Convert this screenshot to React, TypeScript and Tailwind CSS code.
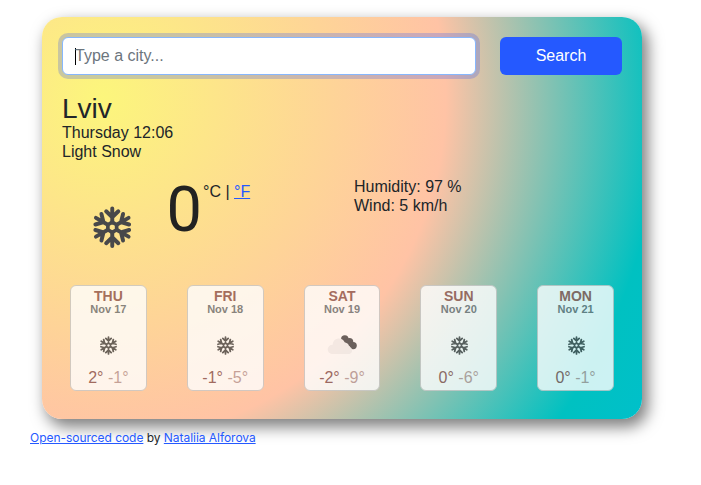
const ARMS = [0, 60, 120, 180, 240, 300];

function Snowflake({ className }: { className: string }) {
  return (
    <svg viewBox="-21 -21 42 42" className={className} fill="none" stroke="#48484a" strokeWidth="3.9" strokeLinecap="round">
      <polygon points="0,-5 4.33,-2.5 4.33,2.5 0,5 -4.33,2.5 -4.33,-2.5" strokeWidth="3.6" strokeLinejoin="round" />
      {ARMS.map((a) => (
        <path key={a} transform={`rotate(${a})`} d="M0 -5V-18.6M-6 -15.8L0 -10L6 -15.8" />
      ))}
    </svg>
  );
}

function Clouds({ className }: { className: string }) {
  return (
    <svg viewBox="0 0 30 20" className={className}>
      <g fill="#48484a">
        <circle cx="17.8" cy="4" r="3.7" />
        <circle cx="22.3" cy="7" r="4" />
        <circle cx="26.2" cy="10.6" r="3.6" />
      </g>
      <path fill="#f2f2f2" d="M5 19a4.6 4.6 0 0 1 .6-9.2A6.8 6.8 0 0 1 11 3.6 6.8 6.8 0 0 1 17.8 7.6a5 5 0 0 1 4.4 4.2 3.7 3.7 0 0 1 0 7.2Z" />
    </svg>
  );
}

const DAYS = [
  { day: "THU", date: "Nov 17", icon: "snow", max: "2°", min: "-1°" },
  { day: "FRI", date: "Nov 18", icon: "snow", max: "-1°", min: "-5°" },
  { day: "SAT", date: "Nov 19", icon: "cloud", max: "-2°", min: "-9°" },
  { day: "SUN", date: "Nov 20", icon: "snow", max: "0°", min: "-6°" },
  { day: "MON", date: "Nov 21", icon: "snow", max: "0°", min: "-1°" },
];

export default function App() {
  return (
    <div className="h-[485px] w-[701px] overflow-hidden bg-white pt-[17px] font-['Liberation_Sans',Arial,sans-serif] text-base text-[#212529]">
      <main className="ml-[42px] h-[402px] w-[600px] rounded-[20px] bg-[radial-gradient(circle_at_10%_20%,#fcf67c_0%,#ffc3a5_54.7%,#00c1c1_88.9%,#00c0ca_100%)] px-5 pt-5 shadow-[5px_7px_15px_1px_rgba(0,0,0,0.5)]">
        <form className="flex justify-between">
          <div className="flex h-[38px] w-[414px] items-center rounded-md border border-[#86b7fe] bg-white px-3 shadow-[0_0_0_4px_rgba(67,97,238,0.28)]">
            <span className="h-[17px] w-px bg-black" />
            <span className="-ml-px text-[#6c757d]">Type a city...</span>
          </div>
          <button type="button" className="h-[38px] w-[122px] rounded-md bg-[#2559ff] text-white">
            Search
          </button>
        </form>

        <h1 className="mt-[18px] text-[28px] leading-[31px]">Lviv</h1>
        <p className="-mt-px leading-[19px]">Thursday 12:06</p>
        <p className="leading-[19px]">Light Snow</p>

        <section className="mt-[16px] flex h-[108px]">
          <Snowflake className="mt-[29px] ml-[28.5px] size-[42.5px]" />
          <div className="ml-[33px] flex w-[188px] items-start">
            <span className="mt-px ml-[0.5px] w-[36.5px] font-[Roboto,sans-serif] text-[63px] leading-[63px] text-[#222]">0</span>
            <span className="mt-[5px] leading-[19px]">
              °C | <a className="text-[#2559ff] underline">°F</a>
            </span>
          </div>
          <div className="leading-[19px]">
            <p>Humidity: 97 %</p>
            <p>Wind: 5 km/h</p>
          </div>
        </section>

        <section className="flex justify-between px-2">
          {DAYS.map((d) => (
            <article
              key={d.day}
              className="flex h-[106px] w-[76.8px] flex-col items-center rounded-md border border-[#c8c8c8] bg-white opacity-80"
            >
              <h2 className="mt-[2px] text-sm leading-4 font-bold text-[#8f564f]">{d.day}</h2>
              <p className="text-[11px] leading-[11px] font-bold text-[#6c7176]">{d.date}</p>
              <div className="mt-[18px] flex h-6 items-center justify-center">
                {d.icon === "snow" ? <Snowflake className="mt-px ml-px size-[19px]" /> : <Clouds className="h-5 w-[30px]" />}
              </div>
              <p className="mt-[11px] leading-[19px] text-[#8a5350]">
                {d.max} <span className="opacity-60">{d.min}</span>
              </p>
            </article>
          ))}
        </section>
      </main>
      <footer className="mt-[10px] ml-[30px] font-[Inter,sans-serif] text-xs leading-[18px] tracking-[-0.04px]">
        <a className="text-[#2559ff] underline">Open-sourced code</a> by <a className="text-[#2559ff] underline">Nataliia Alforova</a>
      </footer>
    </div>
  );
}
